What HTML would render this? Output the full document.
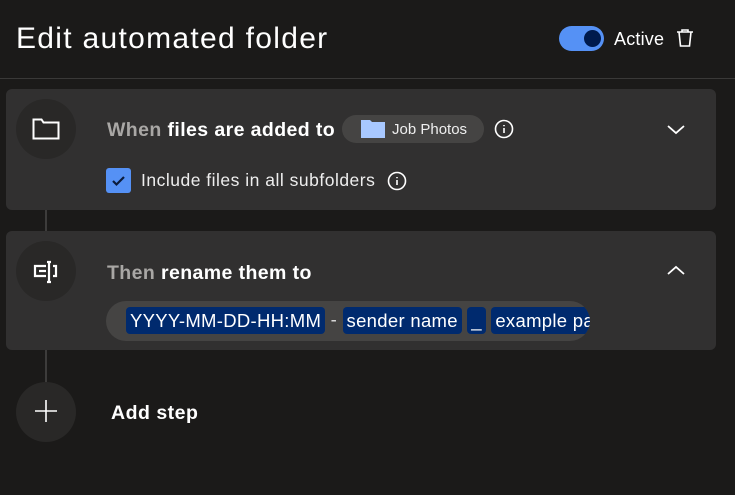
<!DOCTYPE html>
<html><head><style>
*{margin:0;padding:0;box-sizing:border-box}
body{width:735px;height:495px;background:#1b1a19;font-family:"Liberation Sans",sans-serif;color:#fff;position:relative;overflow:hidden}
.a{position:absolute;white-space:nowrap}
.card{position:absolute;left:6px;width:710px;background:#313030;border-radius:6px}
.circ{position:absolute;left:16px;width:60px;height:60px;border-radius:50%;background:#292827}
.tok{display:inline-block;background:#002a6e;border-radius:4px;padding:0 4px;height:27px;line-height:27px;vertical-align:middle}
</style></head><body>
<div class="a" style="left:16px;top:22px;font-size:30px;letter-spacing:1.3px;color:#fff">Edit automated folder</div>
<div class="a" style="left:559px;top:26px;width:45px;height:25px;border-radius:13px;background:#5591f5"></div>
<div class="a" style="left:584px;top:30px;width:17px;height:17px;border-radius:50%;background:#001a4d"></div>
<div class="a" style="left:614px;top:29px;font-size:18px;letter-spacing:0.2px">Active</div>
<svg class="a" style="left:675px;top:28px" width="20" height="20" viewBox="0 0 20 20" fill="none" stroke="#fff" stroke-width="1.6"><path d="M2 4h16M7 4V2h6v2M4 4l1.5 14h9L16 4"/></svg>
<div class="a" style="left:0;top:78px;width:735px;height:1px;background:#3a3938"></div>

<div class="a" style="left:45px;top:130px;width:2px;height:282px;background:#3d3c3b"></div>

<div class="card" style="top:89px;height:121px"></div>
<div class="card" style="top:231px;height:119px"></div>

<div class="circ" style="top:99px"></div>
<svg class="a" style="left:32px;top:116px" width="28" height="26" viewBox="0 0 28 26" fill="none" stroke="#fff" stroke-width="2"><path d="M1.5 3.5h8l2 3h15v16h-25z"/></svg>
<div class="a" style="left:107px;top:119px;font-size:19.5px;letter-spacing:0.4px;font-weight:bold"><span style="color:#a9a7a5">When</span> files are added to</div>
<div class="a" style="left:342px;top:115px;width:142px;height:28px;border-radius:14px;background:#454443"></div>
<svg class="a" style="left:361px;top:119px" width="24" height="19" viewBox="0 0 24 19"><path d="M0 1h9l2 2h13v16H0z" fill="#a8c8ff"/></svg>
<div class="a" style="left:392px;top:121px;font-size:15px;color:#eee">Job Photos</div>
<svg class="a" style="left:494px;top:119px" width="20" height="20" viewBox="0 0 20 20" fill="none" stroke="#fff" stroke-width="1.6"><circle cx="10" cy="10" r="8.5"/><path d="M10 9v5M10 6v1.2"/></svg>
<svg class="a" style="left:666px;top:124px" width="20" height="12" viewBox="0 0 20 12" fill="none" stroke="#fff" stroke-width="1.8"><path d="M2 2l8 7 8-7"/></svg>
<div class="a" style="left:106px;top:168px;width:25px;height:25px;border-radius:3px;background:#5591f5"></div>
<svg class="a" style="left:110px;top:172px" width="17" height="17" viewBox="0 0 17 17" fill="none" stroke="#0b1c3d" stroke-width="2.2"><path d="M3 9l3.5 3.5L14 5"/></svg>
<div class="a" style="left:141px;top:170px;font-size:17.5px;letter-spacing:0.5px;color:#eee">Include files in all subfolders</div>
<svg class="a" style="left:387px;top:171px" width="20" height="20" viewBox="0 0 20 20" fill="none" stroke="#fff" stroke-width="1.6"><circle cx="10" cy="10" r="8.5"/><path d="M10 9v5M10 6v1.2"/></svg>

<div class="circ" style="top:241px"></div>
<svg class="a" style="left:32px;top:259px" width="28" height="26" viewBox="0 0 28 26" fill="none" stroke="#fff" stroke-width="2.2"><path d="M14 7H3v10h11M7 12h7M15 3h4M15 23h4M17 3v20M21 7h3v10h-3"/></svg>
<div class="a" style="left:107px;top:262px;font-size:19.5px;letter-spacing:0.4px;font-weight:bold"><span style="color:#a9a7a5">Then</span> rename them to</div>
<svg class="a" style="left:666px;top:264px" width="20" height="12" viewBox="0 0 20 12" fill="none" stroke="#fff" stroke-width="1.8"><path d="M2 10l8-7 8 7"/></svg>
<div class="a" style="left:106px;top:301px;width:484px;height:40px;border-radius:20px;background:#454443;overflow:hidden;white-space:nowrap;padding:6px 0 0 20px;font-size:18.5px;letter-spacing:0.3px;color:#fff">
<span class="tok">YYYY-MM-DD-HH:MM</span> <span style="color:#ddd">-</span> <span class="tok">sender name</span> <span class="tok">_</span> <span class="tok">example part</span>
</div>

<div class="circ" style="top:382px"></div>
<svg class="a" style="left:33px;top:398px" width="26" height="26" viewBox="0 0 26 26" stroke="#fff" stroke-width="1.6"><path d="M13 2v22M2 13h22"/></svg>
<div class="a" style="left:111px;top:402px;font-size:19.5px;letter-spacing:0.5px;font-weight:bold">Add step</div>
</body></html>
